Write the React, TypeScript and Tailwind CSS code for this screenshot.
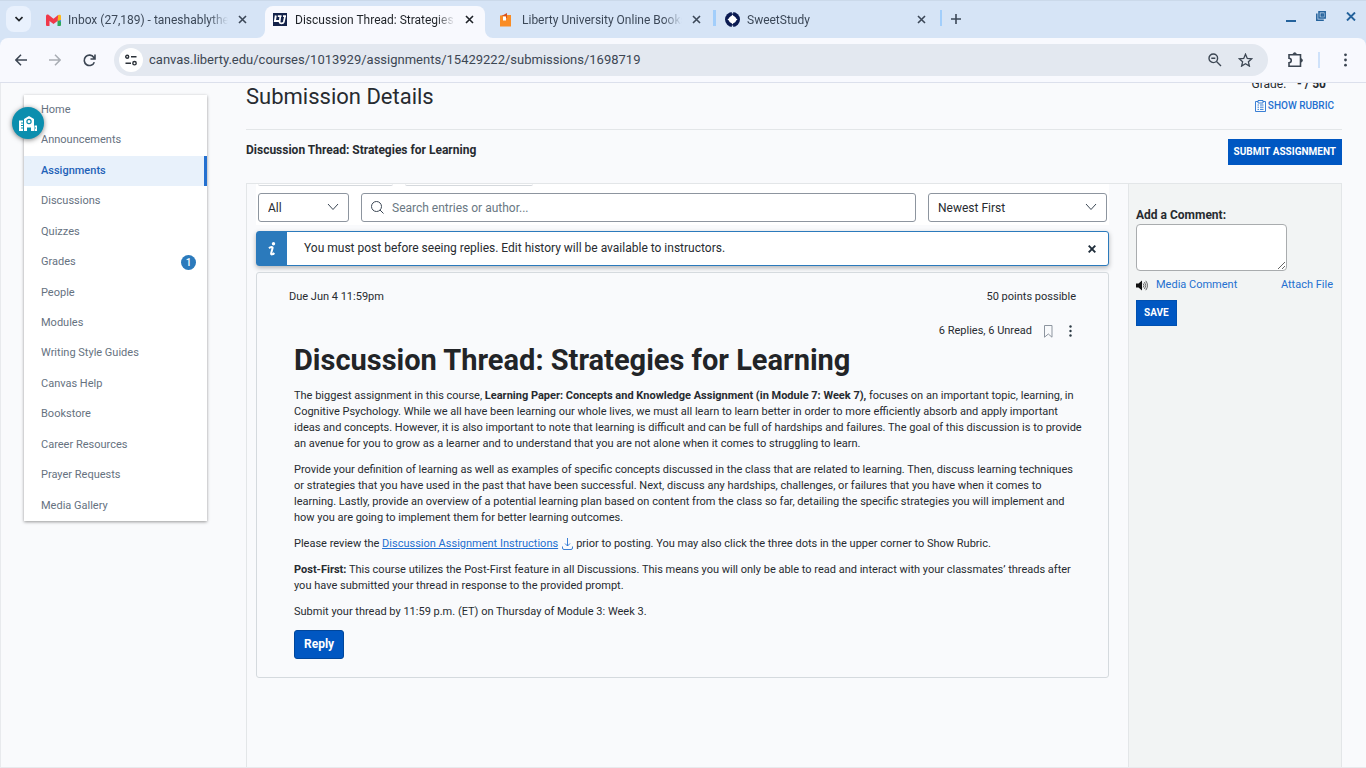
import type { ReactNode } from 'react'

const navItems = [
  { label: 'Home' },
  { label: 'Announcements' },
  { label: 'Assignments', active: true },
  { label: 'Discussions' },
  { label: 'Quizzes' },
  { label: 'Grades', count: 1 },
  { label: 'People' },
  { label: 'Modules' },
  { label: 'Writing Style Guides' },
  { label: 'Canvas Help' },
  { label: 'Bookstore' },
  { label: 'Career Resources' },
  { label: 'Prayer Requests' },
  { label: 'Media Gallery' },
]

function CloseIcon() {
  return (
    <svg width="9" height="9" viewBox="0 0 9 9" fill="none" stroke="currentColor" strokeWidth="1.6">
      <path d="M1 1l7 7M8 1L1 8" />
    </svg>
  )
}

function Chevron() {
  return (
    <svg className="pointer-events-none absolute right-2.5 top-2.5" width="12" height="8" viewBox="0 0 12 8" fill="none" stroke="#3b4754" strokeWidth="1">
      <path d="M1 1l5 5.5L11 1" />
    </svg>
  )
}

function GmailIcon() {
  return (
    <svg width="15" height="12" viewBox="0 0 15 12">
      <path d="M0 2v9a1 1 0 0 0 1 1h2.500V4.500z" fill="#f0384a" />
      <path d="M11.500 12H14a1 1 0 0 0 1-1V4l-3.500 2z" fill="#2ea85a" />
      <path d="M11.500 4.500V7L15 4.500V8z" fill="#3d8bf0" />
      <path d="M15 2v4l-3.500 1V2l.8-.9C13.400.2 15 .8 15 2z" fill="#fbb61a" />
      <path d="M0 2C0 .6 1.700 0 2.800 1l4.700 3.700L12.200 1 11.500 7l-4 3-4-3L0 5z" fill="#f0384a" />
    </svg>
  )
}

function LibertyIcon() {
  return (
    <svg width="14" height="13" viewBox="0 0 14 13">
      <path d="M0 0h14v13H0z" fill="#14234a" />
      <path d="M2.800 2.500L1.900 8H6" fill="none" stroke="#fff" strokeWidth="1.900" />
      <path d="M7.300 3.500L6.600 9c-.1 1.700 3.700 1.700 4.200 0L12 3.500M4.800 3.200h3.700M10 3.200h3" fill="none" stroke="#fff" strokeWidth="1.700" />
    </svg>
  )
}

function BagIcon() {
  return (
    <svg width="11" height="14" viewBox="0 0 11 14">
      <path d="M0 2.500L8 2h3v11.500H0z" fill="#f98c25" />
      <path d="M1.500 3L7 0v5H5.500V3z" fill="#d9531e" />
      <path d="M3 3.500h3v4H3z" fill="#fff" />
    </svg>
  )
}

function SweetIcon() {
  return (
    <svg width="15" height="15" viewBox="0 0 15 15">
      <circle cx="7.500" cy="7.500" r="7.500" fill="#0b1b52" />
      <path d="M7.500 2.500l1.600 2.200 3.400 2.800-3.400 2.800-1.600 2.200-1.600-2.200-3.400-2.800 3.400-2.800z" fill="#fff" />
      <circle cx="7.500" cy="7.500" r="3.600" fill="#fff" />
      <path d="M6.800 0h1.400v1.500H6.800zM6.800 13.500h1.400V15H6.800z" fill="#d6e4f6" />
    </svg>
  )
}

function Tab({ icon, title, active }: { icon: ReactNode; title: string; active?: boolean }) {
  return (
    <div
      className={
        active
          ? 'relative flex w-[220px] items-center rounded-t-lg bg-[#f8f9fe] pb-[5px] pl-2 pr-[11px] text-[#1f2328]'
          : 'relative flex w-[220px] items-center pb-[5px] pl-2 pr-[11px] text-[#3c4858]'
      }
    >
      {active && (
        <>
          <svg className="absolute bottom-0 -left-2" width="8" height="8" viewBox="0 0 8 8"><path d="M8 0v8H0a8 8 0 0 0 8-8z" fill="#f8f9fe" /></svg>
          <svg className="absolute bottom-0 -right-2" width="8" height="8" viewBox="0 0 8 8"><path d="M0 0v8h8a8 8 0 0 1-8-8z" fill="#f8f9fe" /></svg>
        </>
      )}
      <span className="flex w-[22px] shrink-0 items-center">{icon}</span>
      <span className="w-[160px] shrink-0 overflow-hidden whitespace-nowrap text-[12px] leading-4 [mask-image:linear-gradient(to_right,black_88%,transparent)]">
        {title}
      </span>
      <button type="button" aria-label="Close tab" className="ml-auto"><CloseIcon /></button>
    </div>
  )
}

function BrowserChrome() {
  return (
    <header className="shrink-0 bg-[#d6e4f6]">
      <div className="flex h-[38px] border-t border-[#cbd9ea] pt-[5px]">
        <button type="button" aria-label="Search tabs" className="ml-1.5 mr-[7px] flex h-[26px] w-[25px] items-center justify-center rounded-lg bg-[#e9f1fd]">
          <svg width="8" height="6" viewBox="0 0 8 6" fill="none" stroke="#1f2328" strokeWidth="1.700"><path d="M.5 1L4 4.500 7.500 1" /></svg>
        </button>
        <Tab icon={<GmailIcon />} title="Inbox (27,189) - taneshablythe1" />
        <span className="w-[7px] shrink-0" />
        <Tab active icon={<LibertyIcon />} title="Discussion Thread: Strategies for Learning" />
        <span className="w-[7px] shrink-0" />
        <Tab icon={<BagIcon />} title="Liberty University Online Bookstore" />
        <span className="mx-px mt-1 h-4 w-[3px] shrink-0 bg-[#a2cefb]" />
        <Tab icon={<SweetIcon />} title="SweetStudy" />
        <span className="ml-[3px] mt-1 h-4 w-0.5 shrink-0 bg-[#a2cefb]" />
        <button type="button" aria-label="New tab" className="ml-[9px] flex h-[26px] items-center text-[#3c4858]">
          <svg width="10" height="10" viewBox="0 0 10 10" stroke="currentColor" strokeWidth="1.600"><path d="M5 0v10M0 5h10" /></svg>
        </button>
        <div className="ml-auto mr-[10px] flex h-5 items-center gap-5 text-[#24629c]">
          <button type="button" aria-label="Minimize" className="flex h-3 items-end"><span className="block h-0.5 w-[10px] bg-[#24629c]" /></button>
          <button type="button" aria-label="Restore">
            <svg width="10" height="10" viewBox="0 0 10 10" fill="none" stroke="currentColor" strokeWidth="1.500"><path d="M3 .8h6.200V7H3zM5.200 3h2v2h-2zM.8 2.500v6.700h7" /></svg>
          </button>
          <button type="button" aria-label="Close window">
            <svg width="10" height="9" viewBox="0 0 10 9" stroke="currentColor" strokeWidth="1.900"><path d="M1 .5l8 8M9 .5l-8 8" /></svg>
          </button>
        </div>
      </div>
      <div className="flex h-[45px] items-center rounded-t-lg border-b border-[#dce0ec] bg-[#f8f9fe] text-[#3c4653]">
        <button type="button" aria-label="Back" className="ml-[15px]">
          <svg width="12" height="12" viewBox="0 0 12 12" fill="none" stroke="currentColor" strokeWidth="1.500"><path d="M12 6H1M6 .8L.9 6 6 11.200" /></svg>
        </button>
        <button type="button" aria-label="Forward" className="ml-[22px] text-[#a9adb4]">
          <svg width="12" height="12" viewBox="0 0 12 12" fill="none" stroke="currentColor" strokeWidth="1.500"><path d="M0 6h11M6 .8L11.100 6 6 11.200" /></svg>
        </button>
        <button type="button" aria-label="Reload" className="ml-[22px]">
          <svg width="13" height="13" viewBox="0 0 13 13" fill="none" stroke="currentColor" strokeWidth="1.600"><path d="M11.300 8.200A5.200 5.200 0 1 1 10.800 3.500L12 5M12 .5V5H7.500" /></svg>
        </button>
        <div className="ml-[18px] flex h-8 flex-1 items-center rounded-full bg-[#e3e8f0] pl-[5px] pr-[15px]">
          <span className="flex h-6 w-6 items-center justify-center rounded-full bg-white">
            <svg width="12" height="12" viewBox="0 0 12 12" fill="none" stroke="#2b3138" strokeWidth="1.400"><circle cx="2.200" cy="2.700" r="1.500" /><path d="M6 2.700h5.500M.5 9.200H6" /><circle cx="9.500" cy="9.200" r="1.700" /></svg>
          </span>
          <input
            aria-label="Address"
            className="ml-1.5 min-w-0 flex-1 bg-transparent text-[13px] text-[#3c4653] outline-none"
            defaultValue="canvas.liberty.edu/courses/1013929/assignments/15429222/submissions/1698719"
          />
          <button type="button" aria-label="Zoom">
            <svg width="14" height="14" viewBox="0 0 14 14" fill="none" stroke="currentColor" strokeWidth="1.400"><circle cx="5.300" cy="5.300" r="4.300" /><path d="M8.500 8.500L13 13M3.300 5.300h4" /></svg>
          </button>
          <button type="button" aria-label="Bookmark" className="ml-4">
            <svg width="15" height="14" viewBox="0 0 15 14" fill="none" stroke="currentColor" strokeWidth="1.300"><path d="M7.500 1.200l1.800 4.200 4.500.4-3.400 3 1 4.300-3.900-2.300-3.900 2.300 1-4.300-3.400-3 4.500-.4z" /></svg>
          </button>
        </div>
        <button type="button" aria-label="Extensions" className="ml-5">
          <svg width="15" height="16" viewBox="0 0 15 16" fill="none" stroke="currentColor" strokeWidth="1.600"><path d="M1 2.700h11.500v11.500H1v-3.500c3 0 3-4.500 0-4.500z" /><path d="M5 2.500a1.700 1.700 0 0 1 3.400 0zM12.800 6.800a1.600 1.600 0 0 1 0 3.200z" fill="currentColor" strokeWidth="1" /></svg>
        </button>
        <span className="ml-[15px] h-4 w-0.5 bg-[#cfe2fa]" />
        <button type="button" aria-label="Menu" className="ml-6 mr-[19px]">
          <svg width="3" height="14" viewBox="0 0 3 14" fill="currentColor"><circle cx="1.500" cy="1.800" r="1.400" /><circle cx="1.500" cy="7" r="1.400" /><circle cx="1.500" cy="12.200" r="1.400" /></svg>
        </button>
      </div>
    </header>
  )
}

function CourseNav() {
  return (
    <div className="relative mt-3 w-[183px] shrink-0">
      <nav className="grid h-[426px] auto-rows-fr bg-white shadow-[0_1px_3px_rgba(0,0,0,0.4)]">
        {navItems.map(({ label, active, count }) => (
          <a
            key={label}
            href="#"
            className={
              active
                ? 'flex items-center border-r-3 border-[#2470d0] bg-[#e8f1fb] pl-[17px] text-[11px] font-medium text-[#1f62b8]'
                : 'flex items-center pl-[17px] pr-[11px] text-[11px] text-[#66727f]'
            }
          >
            {label}
            {count && (
              <span className="ml-auto flex h-[15px] w-[15px] items-center justify-center rounded-full bg-[#2b7abc] text-[10px] font-medium text-white">
                {count}
              </span>
            )}
          </a>
        ))}
      </nav>
      <button type="button" aria-label="Campus tools" className="absolute -left-3 top-3 flex h-8 w-8 items-center justify-center rounded-full bg-[#0b8eae] shadow-[0_1px_5px_rgba(0,0,0,0.5)]">
        <svg width="18" height="15" viewBox="0 0 18 15" fill="#fff">
          <path d="M0 4.500h4V15H0zM5 15V3l5-3 5 3v12h-3v-3.500H8V15zM15.500 9.500H18V15h-2.500z" />
          <circle cx="10" cy="5.500" r="2.100" fill="none" stroke="#0b8eae" strokeWidth="1.200" />
          <path d="M2 6.500h2v1H2zM2 9h2v1H2zM2 11.500h2v1H2zM16 11.500h1v1h-1z" fill="#0b8eae" />
        </svg>
      </button>
    </div>
  )
}

function FilterBar() {
  return (
    <div className="bg-white px-0.5 pb-[3px]">
      <div className="flex gap-3">
        <span className="h-0.5 w-[135px] rounded-b-sm border-b border-[#d5d9dd]" />
        <span className="h-0.5 w-[128px] rounded-b-sm border-b border-[#d5d9dd]" />
      </div>
      <div className="mt-[7px] flex gap-3 text-[12px] text-[#272b30]">
        <div className="relative">
          <select aria-label="Filter by" className="h-[29px] w-[91px] appearance-none rounded-[3px] border border-[#8d959f] bg-white pl-[9px]">
            <option>All</option>
            <option>Unread</option>
          </select>
          <Chevron />
        </div>
        <div className="relative flex-1">
          <svg className="pointer-events-none absolute left-2.5 top-2" width="13" height="13" viewBox="0 0 13 13" fill="none" stroke="#3b4754" strokeWidth="1"><circle cx="5.500" cy="5.500" r="5" /><path d="M9 9l3.500 3.500" /></svg>
          <input
            type="search"
            aria-label="Search entries or author"
            placeholder="Search entries or author..."
            className="h-[29px] w-full rounded-[3px] border border-[#8d959f] bg-white pl-[30px] placeholder:text-[#6a7883]"
          />
        </div>
        <div className="relative">
          <select aria-label="Sort by" className="h-[29px] w-[179px] appearance-none rounded-[3px] border border-[#8d959f] bg-white pl-[9px]">
            <option>Newest First</option>
            <option>Oldest First</option>
          </select>
          <Chevron />
        </div>
      </div>
    </div>
  )
}

function Notice() {
  return (
    <div className="mt-[6px] flex h-[35px] items-center rounded-[3px] border border-[#2b7abc] bg-white text-[12px] text-[#272b30] shadow-[0_2px_5px_rgba(0,0,0,0.28)]">
      <span className="flex h-full w-[30px] items-center justify-center bg-[#2b7abc]">
        <svg width="8" height="14" viewBox="0 0 8 14" fill="none" stroke="#fff">
          <circle cx="5.500" cy="1.800" r="1.700" fill="#fff" stroke="none" />
          <path d="M1 6.200C2.500 4.800 5 4.500 4.600 6L3.100 11.500c-.3 1.500 1.900 1 3.200-.5" strokeWidth="2" />
        </svg>
      </span>
      <p className="ml-[17px] pb-px">You must post before seeing replies. Edit history will be available to instructors.</p>
      <button type="button" aria-label="Dismiss" className="ml-auto mr-3 text-[#1f2d3a]">
        <svg width="8" height="8" viewBox="0 0 8 8" stroke="currentColor" strokeWidth="1.900"><path d="M.7.700l6.600 6.600M7.300.7L.7 7.300" /></svg>
      </button>
    </div>
  )
}

function Topic() {
  return (
    <article className="mt-1.5 rounded-[3px] border border-[#d5dade] pb-[18px] text-[11px] leading-4 text-[#272b30]">
      <div className="flex justify-between px-8 pt-4">
        <span>Due Jun 4 11:59pm</span>
        <span>50 points possible</span>
      </div>
      <div className="mt-[18px] flex items-center justify-end pr-9">
        <span>6 Replies, 6 Unread</span>
        <button type="button" aria-label="Mark as read" className="ml-3">
          <svg width="9" height="13" viewBox="0 0 9 13" fill="none" stroke="#8d959f"><path d="M.5.500h7.500v11.700L4.300 9 .5 12.200z" /></svg>
        </button>
        <button type="button" aria-label="Manage discussion" className="ml-4">
          <svg width="3" height="12" viewBox="0 0 3 12" fill="#2d3b45"><circle cx="1.500" cy="1.500" r="1.200" /><circle cx="1.500" cy="6" r="1.200" /><circle cx="1.500" cy="10.500" r="1.200" /></svg>
        </button>
      </div>
      <div className="pl-[37px] pr-[23px]">
        <h2 className="mt-[3px] text-[29px] font-bold leading-9 text-[#222427]">Discussion Thread: Strategies for Learning</h2>
        <div className="mt-[10px] flex flex-col gap-[10px]">
          <p>
            The biggest assignment in this course, <strong>Learning Paper: Concepts and Knowledge Assignment (in Module 7: Week 7),</strong> focuses on an important topic, learning, in Cognitive Psychology. While we all have been learning our whole lives, we must all learn to learn better in order to more efficiently absorb and apply important ideas and concepts. However, it is also important to note that learning is difficult and can be full of hardships and failures. The goal of this discussion is to provide an avenue for you to grow as a learner and to understand that you are not alone when it comes to struggling to learn.
          </p>
          <p>
            Provide your definition of learning as well as examples of specific concepts discussed in the class that are related to learning. Then, discuss learning techniques<br />
            or strategies that you have used in the past that have been successful. Next, discuss any hardships, challenges, or failures that you have when it comes to<br />
            learning. Lastly, provide an overview of a potential learning plan based on content from the class so far, detailing the specific strategies you will implement and how you are going to implement them for better learning outcomes.
          </p>
          <p>
            Please review the <a href="#" className="text-[#2470d0] underline">Discussion Assignment Instructions</a>
            <svg className="ml-1 mr-[3px] inline" width="11" height="12" viewBox="0 0 11 12" fill="none" stroke="#2470d0" strokeWidth=".9"><path d="M5.500 0v8M3 5.500L5.500 8 8 5.500M.5 8.500v1.500q0 1.500 1.500 1.500h7q1.500 0 1.500-1.500V8.500" /></svg>
            prior to posting. You may also click the three dots in the upper corner to Show Rubric.
          </p>
          <p>
            <strong>Post-First:</strong> This course utilizes the Post-First feature in all Discussions. This means you will only be able to read and interact with your classmates’ threads after you have submitted your thread in response to the provided prompt.
          </p>
          <p>Submit your thread by 11:59 p.m. (ET) on Thursday of Module 3: Week 3.</p>
        </div>
        <button type="button" className="mt-[10px] h-[29px] rounded-[3px] border border-[#00469b] bg-[#0057c2] px-[9px] pb-0.5 text-[12px] font-bold text-white">
          Reply
        </button>
      </div>
    </article>
  )
}

function CommentPanel() {
  return (
    <aside className="w-[214px] shrink-0 border-x border-[#e3e6e8] bg-[#f2f4f4] pl-[7px] pr-2 pt-[23px] text-[11px] leading-4">
      <label htmlFor="comment" className="block text-[12px] font-bold text-[#272b30]">Add a Comment:</label>
      <textarea id="comment" className="mt-px block h-[47px] w-[151px] resize rounded-sm border border-[#a9acae] bg-white" />
      <div className="mt-1.5 flex">
        <svg className="mr-2 mt-[3px]" width="12" height="11" viewBox="0 0 12 11">
          <path d="M0 3.500h2.500L6 .5v10L2.500 7.500H0z" fill="#111" />
          <path d="M7.200 3.500q1.500 2 0 4M8.500 2q2.500 3.500 0 7M9.800.8q3.400 4.700 0 9.400" fill="none" stroke="#444" strokeWidth=".8" />
        </svg>
        <a href="#" className="text-[#2470d0]">Media Comment</a>
        <a href="#" className="ml-auto text-[#2470d0]">Attach File</a>
      </div>
      <button type="button" className="mt-[7px] h-[26px] border border-[#0050b0] bg-[#0057c2] px-[7px] text-[10px] font-bold text-white">SAVE</button>
    </aside>
  )
}

export default function App() {
  return (
    <div className="flex h-screen flex-col overflow-hidden bg-[#f9fafc] font-['Roboto',sans-serif] text-[#272b30]">
      <BrowserChrome />
      <div className="flex min-h-0 flex-1 overflow-hidden border-b border-l border-[#e8eaed] pl-[23px] pr-6">
        <CourseNav />
        <main className="ml-[39px] flex min-w-0 flex-1 flex-col">
          <div className="flex h-[47px] shrink-0 justify-between border-b border-[#e3e6e8]">
            <h1 className="text-[22px] leading-7">Submission Details</h1>
            <div className="-mt-[7px] mr-2 text-right">
              <p className="mr-2 text-[12px] leading-4">Grade: <strong className="ml-2">- / 50</strong></p>
              <a href="#" className="mt-1.5 flex items-center justify-end text-[10px] font-medium leading-4 text-[#2470d0]">
                <svg className="mr-0.5" width="11" height="12" viewBox="0 0 11 12" fill="none" stroke="currentColor" strokeWidth=".9"><path d="M3 1.500H.5v10h10v-10H8M3 .5h5V3H3zM2.500 5H4M5 5h3.500M2.500 7.200H4M5 7.200h3.500M2.500 9.400H4M5 9.400h3.500" /></svg>
                SHOW RUBRIC
              </a>
            </div>
          </div>
          <div className="flex h-[53px] shrink-0 items-start justify-between">
            <h2 className="mt-3 text-[12px] font-bold leading-4">Discussion Thread: Strategies for Learning</h2>
            <button type="button" className="mt-[9px] h-[26px] bg-[#0057c2] px-1.5 pb-0.5 text-[10px] font-bold text-white">SUBMIT ASSIGNMENT</button>
          </div>
          <div className="flex min-h-0 flex-1 border-l border-t border-[#e3e6e8]">
            <section className="min-w-0 flex-1 pl-[9px] pr-[19px]">
              <FilterBar />
              <Notice />
              <Topic />
            </section>
            <CommentPanel />
          </div>
        </main>
      </div>
    </div>
  )
}
